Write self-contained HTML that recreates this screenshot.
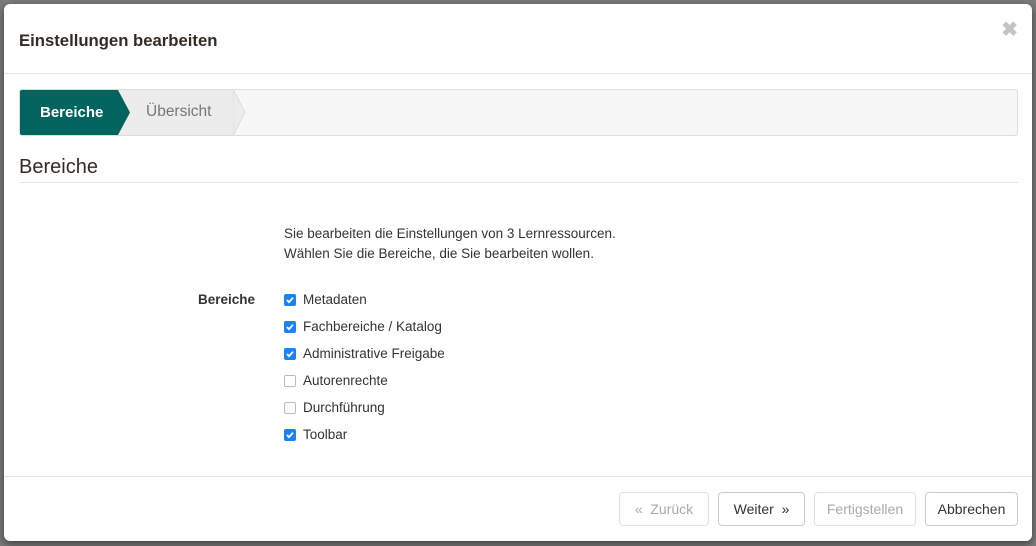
<!DOCTYPE html>
<html><head><meta charset="utf-8"><style>
*{box-sizing:border-box}
body{margin:0;width:1036px;height:546px;overflow:hidden;background:#7b7b7b;font-family:"Liberation Sans",sans-serif;color:#333;position:relative}
.m{position:absolute;left:4px;top:4px;width:1028px;height:537px;background:#fff;border-radius:6px;box-shadow:0 3px 9px rgba(0,0,0,.5)}
.hd{position:absolute;left:0;top:0;right:0;height:70px;border-bottom:1px solid #e5e5e5}
.hd h4{position:absolute;left:15px;top:27px;margin:0;font-size:16.7px;font-weight:bold;color:#342c24}
.x{position:absolute;right:14px;top:13px;font-size:20px;color:#c4c4c4;font-weight:bold}
.wz{position:absolute;left:15px;top:85px;width:999px;height:47px;background:#f7f7f7;border:1px solid #ddd;border-radius:3px;overflow:hidden}
.s1{position:absolute;left:0;top:0;height:45px;width:98px;background:#03635f;color:#fff;font-size:15px;font-weight:bold;padding:14px 0 0 20px}
.s2{position:absolute;left:98px;top:0;height:45px;width:116px;background:#ececec;color:#777;font-size:15.5px;padding:13px 0 0 28px}
.sec{position:absolute;left:15px;top:152px;width:999px;border-bottom:1px solid #e5e5e5;font-size:20px;color:#342c24;padding-bottom:3px}
.p{position:absolute;left:280px;top:220px;font-size:13.5px;line-height:20px;color:#333}
.lb{position:absolute;left:194px;top:288px;font-size:13.5px;font-weight:bold}
.cb{position:absolute;left:280px;font-size:13.5px;color:#333}
.cb i{position:absolute;left:0;top:2px;width:12px;height:12px;border-radius:2px;border:1px solid #bbb;background:#fff}
.cb i.on{background:#1b84f5;border-color:#1b84f5}
.cb i svg{position:absolute;left:0;top:0}
.cb span{position:absolute;left:19px;top:0;white-space:nowrap}
.ft{position:absolute;left:0;right:0;top:472px;border-top:1px solid #e5e5e5}
.b{position:absolute;top:488px;height:34px;border:1px solid #ccc;border-radius:4px;font-size:14px;color:#333;text-align:center;line-height:32px;background:#fff}
.b.d{color:#aaa;border-color:#e0e0e0}
</style></head><body>
<div class="m">
<div class="hd"><h4>Einstellungen bearbeiten</h4><div class="x">✖</div></div>
<div class="wz">
<div class="s2">Übersicht<svg style="position:absolute;right:-13px;top:0" width="14" height="45"><path d="M0 -1L12 22.5L0 46Z" fill="#ececec" stroke="#ddd"/></svg></div>
<div class="s1">Bereiche<svg style="position:absolute;right:-12px;top:0" width="12" height="45"><path d="M0 0L12 22.5L0 45Z" fill="#03635f"/></svg></div>
</div>
<div class="sec">Bereiche</div>
<div class="p">Sie bearbeiten die Einstellungen von 3 Lernressourcen.<br>Wählen Sie die Bereiche, die Sie bearbeiten wollen.</div>
<div class="lb">Bereiche</div>
<div class="cb" style="top:288px"><i class="on"><svg width="10" height="10"><path d="M2 5l2 2.2 4-4.5" stroke="#fff" stroke-width="1.8" fill="none"/></svg></i><span>Metadaten</span></div>
<div class="cb" style="top:315px"><i class="on"><svg width="10" height="10"><path d="M2 5l2 2.2 4-4.5" stroke="#fff" stroke-width="1.8" fill="none"/></svg></i><span>Fachbereiche / Katalog</span></div>
<div class="cb" style="top:342px"><i class="on"><svg width="10" height="10"><path d="M2 5l2 2.2 4-4.5" stroke="#fff" stroke-width="1.8" fill="none"/></svg></i><span>Administrative Freigabe</span></div>
<div class="cb" style="top:369px"><i></i><span>Autorenrechte</span></div>
<div class="cb" style="top:396px"><i></i><span>Durchführung</span></div>
<div class="cb" style="top:423px"><i class="on"><svg width="10" height="10"><path d="M2 5l2 2.2 4-4.5" stroke="#fff" stroke-width="1.8" fill="none"/></svg></i><span>Toolbar</span></div>
<div class="ft"></div>
<div class="b d" style="left:615px;width:90px">« &nbsp;Zurück</div>
<div class="b" style="left:714px;width:87px">Weiter &nbsp;»</div>
<div class="b d" style="left:810px;width:102px">Fertigstellen</div>
<div class="b" style="left:921px;width:93px">Abbrechen</div>
</div>
</body></html>
